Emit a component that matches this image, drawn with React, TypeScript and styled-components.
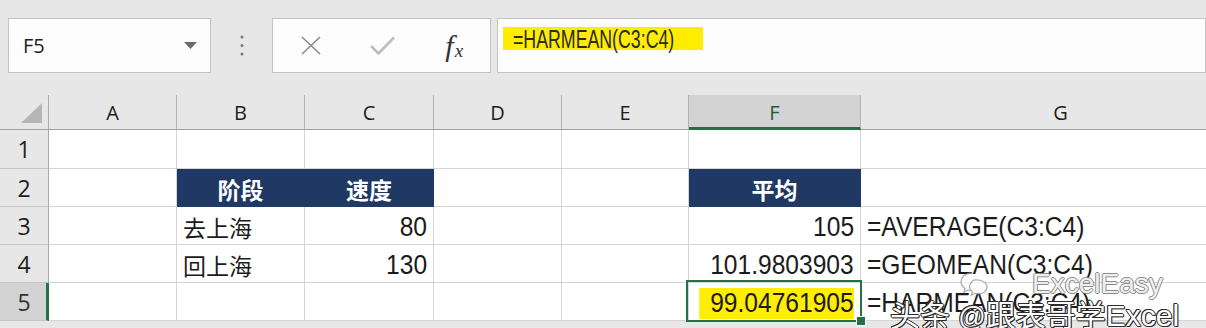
import React from "react";
import styled, { createGlobalStyle } from "styled-components";

const GlobalStyle = createGlobalStyle`
  html, body {
    margin: 0;
    padding: 0;
    background: #e7e7e7;
  }
  body {
    width: 1206px;
    height: 328px;
    overflow: hidden;
    font-family: "Open Sans", "Noto Sans CJK SC", sans-serif;
  }
`;

const cellFont = `"Liberation Sans", "Noto Sans CJK SC", sans-serif`;
const green = "#217346";
const navy = "#203864";
const grid = "#d4d4d4";

const Page = styled.div`
  position: relative;
  width: 1206px;
  height: 328px;
  overflow: hidden;
  background: #e7e7e7;
`;

/* ---------- formula bar ---------- */

const FormulaBar = styled.div`
  display: flex;
  height: 55px;
  padding: 18px 0 0 8px;
  margin-bottom: 22px;
`;

const Box = styled.div`
  box-sizing: border-box;
  height: 55px;
  background: #fdfdfd;
  border: 1px solid #c3c3c3;
  display: flex;
  align-items: center;
`;

const NameBox = styled(Box)`
  width: 203px;
  padding: 0 13px 0 14px;
  justify-content: space-between;
  font-size: 20px;
  color: #222;
`;

const Splitter = styled.div`
  width: 61px;
  display: flex;
  align-items: center;
  justify-content: center;
`;

const FxBox = styled(Box)`
  width: 219px;
  padding-left: 2px;
`;

const FxSlot = styled.div`
  width: 72px;
  display: flex;
  justify-content: center;
  align-items: center;
`;

const FxText = styled.span`
  font-family: "Liberation Serif", "DejaVu Serif", serif;
  font-style: italic;
  font-size: 30px;
  color: #333;
  line-height: 1;
  sub {
    font-size: 19px;
    vertical-align: baseline;
    position: relative;
    top: 1px;
    margin-left: 1px;
  }
`;

const FormulaInput = styled(Box)`
  flex: 1;
  margin-left: 6px;
  padding-left: 5px;
  align-items: flex-start;
  padding-top: 8px;
`;

const FormulaHighlight = styled.div`
  width: 200px;
  height: 23px;
  padding-left: 10px;
  box-sizing: border-box;
  background: #ffec00;
  font-family: ${cellFont};
  font-size: 25px;
  line-height: 25px;
  color: #2a2a2a;
  white-space: nowrap;
`;

/* narrow, tall lettering like the sheet's default font */
const Narrow = styled.span<{ $origin?: string; $scale?: number }>`
  display: inline-block;
  transform: scaleX(${(p) => p.$scale ?? 0.91});
  transform-origin: ${(p) => p.$origin ?? "left"};
`;

/* ---------- sheet ---------- */

const Sheet = styled.div`
  display: grid;
  grid-template-columns: 49px 128px 128px 129px 128px 127px 172px 400px;
  grid-template-rows: 35px 39px repeat(5, 38px);
`;

const Corner = styled.div`
  box-sizing: border-box;
  border-right: 1px solid #a9a9a9;
  border-bottom: 1px solid #9e9e9e;
  display: flex;
  align-items: flex-end;
  justify-content: flex-end;
  padding: 0 6px 6px 0;
`;

const ColHead = styled.div<{ $selected?: boolean }>`
  box-sizing: border-box;
  display: flex;
  align-items: center;
  justify-content: center;
  font-size: 20px;
  color: ${(p) => (p.$selected ? "#1f5c3a" : "#1e1e1e")};
  background: ${(p) => (p.$selected ? "#d3d3d3" : "#e7e7e7")};
  border-right: 1px solid #b4b4b4;
  border-bottom: ${(p) => (p.$selected ? `3px solid ${green}` : "1px solid #9e9e9e")};
  padding-top: ${(p) => (p.$selected ? "2px" : "0")};
`;

const RowHead = styled.div<{ $selected?: boolean }>`
  box-sizing: border-box;
  display: flex;
  align-items: center;
  justify-content: center;
  font-size: 23px;
  color: ${(p) => (p.$selected ? "#333" : "#1e1e1e")};
  background: ${(p) => (p.$selected ? "#d3d3d3" : "#e7e7e7")};
  border-right: ${(p) => (p.$selected ? `3px solid ${green}` : "1px solid #a9a9a9")};
  border-bottom: 1px solid #c4c4c4;
  padding-left: ${(p) => (p.$selected ? "2px" : "0")};
`;

type Align = "left" | "right" | "center";

const Cell = styled.div<{ $align?: Align; $fill?: boolean; $cjk?: boolean }>`
  position: relative;
  box-sizing: border-box;
  display: flex;
  align-items: center;
  justify-content: ${(p) =>
    p.$align === "right" ? "flex-end" : p.$align === "center" ? "center" : "flex-start"};
  padding: ${(p) => (p.$cjk ? "2px 6px 0" : "4px 6px 0")};
  white-space: nowrap;
  font-family: ${cellFont};
  font-size: ${(p) => (p.$cjk ? "23px" : "27px")};
  font-weight: ${(p) => (p.$fill ? 700 : 400)};
  color: ${(p) => (p.$fill ? "#fff" : "#1b1b1b")};
  background: ${(p) => (p.$fill ? navy : "#fff")};
  border-right: 1px solid ${(p) => (p.$fill ? navy : grid)};
  border-bottom: 1px solid ${(p) => (p.$fill ? navy : grid)};
`;

const Marker = styled(Narrow)`
  background: #ffee00;
  padding: 3px 0 4px 12px;
  line-height: 24px;
`;

const Selection = styled.div`
  position: absolute;
  top: -3px;
  left: -3px;
  right: -2px;
  bottom: -2px;
  border: 2px solid ${green};
  z-index: 2;
  pointer-events: none;
`;

const FillHandle = styled.div`
  position: absolute;
  right: -6px;
  bottom: -6px;
  width: 8px;
  height: 8px;
  background: ${green};
  border: 1px solid #fff;
`;

/* ---------- watermark ---------- */

const Watermark = styled.div`
  position: absolute;
  left: 890px;
  top: 268px;
  z-index: 5;
  pointer-events: none;
`;

const BrandLine = styled.div`
  display: flex;
  align-items: center;
  gap: 40px;
  padding-left: 70px;
  font-family: "Liberation Sans", sans-serif;
  font-size: 28px;
  line-height: 32px;
  color: rgba(255, 255, 255, 0.9);
  text-shadow: 1px 0 #8a8a8a, -1px 0 #8a8a8a, 0 1px #8a8a8a, 0 -1px #8a8a8a;
`;

const CreditLine = styled.div`
  font-family: "Liberation Sans", "Noto Sans CJK SC", sans-serif;
  font-size: 30px;
  line-height: 32px;
  color: #fff;
  white-space: nowrap;
  text-shadow: 1px 0 #2b2b2b, -1px 0 #2b2b2b, 0 1px #2b2b2b, 0 -1px #2b2b2b,
    1px 1px #2b2b2b, -1px -1px #2b2b2b;
  span {
    font-size: 27px;
  }
`;

const columns = ["A", "B", "C", "D", "E", "F", "G"];

type CellData = { text?: string; align?: Align; fill?: boolean; cjk?: boolean };

const rows: CellData[][] = [
  [{}, {}, {}, {}, {}, {}, {}],
  [
    {},
    { text: "阶段", align: "center", fill: true, cjk: true },
    { text: "速度", align: "center", fill: true, cjk: true },
    {},
    {},
    { text: "平均", align: "center", fill: true, cjk: true },
    {},
  ],
  [
    {},
    { text: "去上海", cjk: true },
    { text: "80", align: "right" },
    {},
    {},
    { text: "105", align: "right" },
    { text: "=AVERAGE(C3:C4)" },
  ],
  [
    {},
    { text: "回上海", cjk: true },
    { text: "130", align: "right" },
    {},
    {},
    { text: "101.9803903", align: "right" },
    { text: "=GEOMEAN(C3:C4)" },
  ],
  [{}, {}, {}, {}, {}, {}, { text: "=HARMEAN(C3:C4)" }],
];

function CellContent({ cell }: { cell: CellData }) {
  if (!cell.text) return null;
  if (cell.cjk) return <>{cell.text}</>;
  return <Narrow $origin={cell.align === "right" ? "right" : "left"}>{cell.text}</Narrow>;
}

export default function App() {
  return (
    <Page>
      <GlobalStyle />
      <FormulaBar>
        <NameBox>
          <span>F5</span>
          <svg width="13" height="7" viewBox="0 0 13 7">
            <path d="M0 0 L13 0 L6.5 7 Z" fill="#6b6b6b" />
          </svg>
        </NameBox>
        <Splitter>
          <svg width="4" height="22" viewBox="0 0 4 22">
            <circle cx="2" cy="2" r="1.5" fill="#7a7a7a" />
            <circle cx="2" cy="10.5" r="1.5" fill="#7a7a7a" />
            <circle cx="2" cy="19" r="1.5" fill="#7a7a7a" />
          </svg>
        </Splitter>
        <FxBox>
          <FxSlot>
            <svg width="20" height="19" viewBox="0 0 20 19">
              <path d="M1 1 L19 18 M19 1 L1 18" stroke="#8c8c8c" strokeWidth="1.6" fill="none" />
            </svg>
          </FxSlot>
          <FxSlot>
            <svg width="25" height="19" viewBox="0 0 25 19">
              <path d="M1 10 L8.5 17.5 L24 1.5" stroke="#bdbdbd" strokeWidth="2.6" fill="none" />
            </svg>
          </FxSlot>
          <FxSlot>
            <FxText>
              f<sub>x</sub>
            </FxText>
          </FxSlot>
        </FxBox>
        <FormulaInput>
          <FormulaHighlight>
            <Narrow $scale={0.71}>=HARMEAN(C3:C4)</Narrow>
          </FormulaHighlight>
        </FormulaInput>
      </FormulaBar>

      <Sheet>
        <Corner>
          <svg width="21" height="20" viewBox="0 0 21 20">
            <path d="M21 0 L21 20 L0 20 Z" fill="#b6b6b6" />
          </svg>
        </Corner>
        {columns.map((c) => (
          <ColHead key={c} $selected={c === "F"}>
            {c}
          </ColHead>
        ))}
        {rows.map((row, r) => (
          <React.Fragment key={r}>
            <RowHead $selected={r === 4}>{r + 1}</RowHead>
            {row.map((cell, c) => {
              const isActive = r === 4 && c === 5;
              return (
                <Cell key={c} $align={isActive ? "right" : cell.align} $fill={cell.fill} $cjk={cell.cjk}>
                  {isActive ? (
                    <>
                      <Marker $origin="right">99.04761905</Marker>
                      <Selection>
                        <FillHandle />
                      </Selection>
                    </>
                  ) : (
                    <CellContent cell={cell} />
                  )}
                </Cell>
              );
            })}
          </React.Fragment>
        ))}
      </Sheet>

      <Watermark>
        <BrandLine>
          <svg width="32" height="28" viewBox="0 0 32 28">
            <path
              d="M12 3 C5 3 1 7.5 1 12 C1 15 3 17 5 18.5 L4 22 L8 20 C9.5 20.5 11 20.6 12 20.6 M14 10 C20 9 27 12 27 17 C27 21 23 24 19 24 C17.5 24 16 23.8 15 23.4 L11.5 25 L12.5 22 C10.5 20.5 9.5 19 9.5 17 C9.5 13 13 10.5 14 10"
              stroke="rgba(140,140,140,0.7)"
              strokeWidth="1.3"
              fill="rgba(255,255,255,0.6)"
            />
          </svg>
          <span>ExcelEasy</span>
        </BrandLine>
        <CreditLine>
          头条 <span>@</span>跟表哥学Excel
        </CreditLine>
      </Watermark>
    </Page>
  );
}
